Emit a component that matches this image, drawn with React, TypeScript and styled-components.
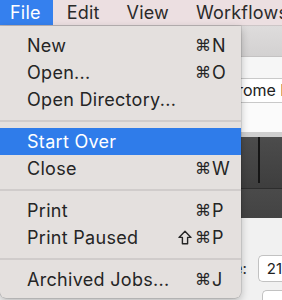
import React from "react";
import styled, { createGlobalStyle } from "styled-components";

const GlobalStyle = createGlobalStyle`
  html, body {
    margin: 0;
    padding: 0;
    background: #ffffff;
  }
  body {
    font-family: Inter, "Liberation Sans", "DejaVu Sans", sans-serif;
    -webkit-font-smoothing: antialiased;
  }
`;

const Screen = styled.div`
  position: relative;
  width: 282px;
  height: 300px;
  overflow: hidden;
  display: flex;
  flex-direction: column;
`;

const MenuBar = styled.div`
  display: flex;
  height: 25px;
  background: #ecdfe1;
  border-bottom: 1px solid #cdc6c7;
  flex-shrink: 0;
`;

const MenuTitle = styled.div<{ $active?: boolean }>`
  display: flex;
  align-items: center;
  padding: 0 ${(p) => (p.$active ? "12px 0 10px" : "13px 0 14px")};
  font-size: 18px;
  letter-spacing: 0.2px;
  color: ${(p) => (p.$active ? "#ffffff" : "#2a2a2a")};
  background: ${(p) => (p.$active ? "#3580ee" : "transparent")};
  white-space: nowrap;
`;

// the window that sits behind the open menu
const Window = styled.div`
  flex: 1;
  display: flex;
  flex-direction: column;
  background: #f2f2f2;
`;

const TitleBar = styled.div`
  height: 30px;
  background: linear-gradient(#dedcdc, #d3d1d1);
  border-bottom: 1px solid #c4c2c2;
`;

const Band = styled.div<{ $h: number; $bg: string }>`
  height: ${(p) => p.$h}px;
  background: ${(p) => p.$bg};
  flex-shrink: 0;
`;

const FieldRow = styled.div`
  display: flex;
  align-items: center;
  height: 25px;
  background: #f7f7f7;
  padding-left: 196px;
`;

const TextField = styled.div`
  flex: 1;
  height: 23px;
  background: #ffffff;
  border: 1px solid #c9c9c9;
  border-right: none;
  font-size: 16px;
  line-height: 23px;
  color: #222;
  padding-left: 19px;
  white-space: nowrap;
  overflow: hidden;
`;

const DarkBar = styled.div`
  display: flex;
  height: 51px;
  background: linear-gradient(#4c4c4c, #3e3e3e);
  padding-left: 258px;
`;

const DarkDivider = styled.div`
  width: 2px;
  height: 46px;
  background: #151515;
`;

const DarkBarLower = styled.div`
  height: 29px;
  background: linear-gradient(#4a4a4a, #434343);
  border-top: 1px solid #2d2d2d;
`;

const FormArea = styled.div`
  flex: 1;
  display: flex;
  flex-direction: column;
  gap: 8px;
  padding-top: 37px;
  background: #f1f1f1;
`;

const FormRow = styled.div`
  display: flex;
  align-items: center;
  gap: 11px;
`;

const FormLabel = styled.div`
  width: 251px;
  text-align: right;
  font-size: 15px;
  color: #2a2a2a;
`;

const SmallInput = styled.div`
  flex: 1;
  height: 25px;
  background: #ffffff;
  border: 1px solid #c2c2c2;
  border-right: none;
  border-radius: 5px 0 0 5px;
  font-size: 15px;
  line-height: 25px;
  padding-left: 8px;
  color: #222;
`;

const DropMenu = styled.div`
  position: absolute;
  top: 26px;
  left: 0;
  width: 241px;
  padding: 6px 0 5px;
  background: #e4e0de;
  border-radius: 0 0 6px 6px;
  box-shadow: 0 3px 8px rgba(0, 0, 0, 0.25), 0 0 0 0.5px rgba(0, 0, 0, 0.18);
  display: flex;
  flex-direction: column;
`;

const MenuItem = styled.div<{ $highlighted?: boolean }>`
  display: flex;
  align-items: center;
  height: 27px;
  padding: 0 12px 0 27px;
  font-size: 18px;
  letter-spacing: 0.3px;
  color: ${(p) => (p.$highlighted ? "#ffffff" : "#252525")};
  background: ${(p) => (p.$highlighted ? "#2f7cea" : "transparent")};
`;

const ItemLabel = styled.span`
  flex: 1;
  white-space: nowrap;
`;

const Shortcut = styled.span`
  display: flex;
  align-items: center;
`;

const Modifiers = styled.span`
  display: flex;
  align-items: center;
  justify-content: flex-end;
  gap: 3px;
  width: 40px;
  font-family: "DejaVu Sans", sans-serif;
  font-size: 16px;
  letter-spacing: 0;
`;

const Key = styled.span`
  width: 17px;
  padding-left: 1px;
`;

const ShiftIcon = styled.svg`
  width: 14px;
  height: 15px;
  flex-shrink: 0;
`;

const Separator = styled.div`
  height: 15px;
  display: flex;
  align-items: center;
  &::after {
    content: "";
    flex: 1;
    height: 2px;
    background: #d0cccb;
  }
`;

type Item =
  | { sep: true }
  | { label: string; shift?: boolean; key?: string; active?: boolean };

const items: Item[] = [
  { label: "New", key: "N" },
  { label: "Open...", key: "O" },
  { label: "Open Directory..." },
  { sep: true },
  { label: "Start Over", active: true },
  { label: "Close", key: "W" },
  { sep: true },
  { label: "Print", key: "P" },
  { label: "Print Paused", shift: true, key: "P" },
  { sep: true },
  { label: "Archived Jobs...", key: "J" },
];

function Shift() {
  return (
    <ShiftIcon viewBox="0 0 14 15">
      <path
        d="M7 1.2 L13 7.4 H9.6 V13.8 H4.4 V7.4 H1 Z"
        fill="none"
        stroke="currentColor"
        strokeWidth="1.4"
        strokeLinejoin="round"
      />
    </ShiftIcon>
  );
}

export default function App() {
  return (
    <>
      <GlobalStyle />
      <Screen>
        <MenuBar>
          <MenuTitle $active>File</MenuTitle>
          <MenuTitle>Edit</MenuTitle>
          <MenuTitle>View</MenuTitle>
          <MenuTitle>Workflows</MenuTitle>
        </MenuBar>
        <Window>
          <TitleBar />
          <Band $h={21} $bg="#f6f6f6" />
          <FieldRow>
            <TextField>Chrome Headless</TextField>
          </FieldRow>
          <Band $h={29} $bg="#fbfbfb" />
          <Band $h={5} $bg="#cfcfcf" />
          <DarkBar>
            <DarkDivider />
          </DarkBar>
          <DarkBarLower />
          <FormArea>
            <FormRow>
              <FormLabel>Size:</FormLabel>
              <SmallInput>21</SmallInput>
            </FormRow>
            <FormRow>
              <FormLabel />
              <SmallInput />
            </FormRow>
          </FormArea>
        </Window>
        <DropMenu>
          {items.map((it, i) =>
            "sep" in it ? (
              <Separator key={i} />
            ) : (
              <MenuItem key={i} $highlighted={it.active}>
                <ItemLabel>{it.label}</ItemLabel>
                {it.key && (
                  <Shortcut>
                    <Modifiers>
                      {it.shift && <Shift />}
                      <span>⌘</span>
                    </Modifiers>
                    <Key>{it.key}</Key>
                  </Shortcut>
                )}
              </MenuItem>
            )
          )}
        </DropMenu>
      </Screen>
    </>
  );
}
